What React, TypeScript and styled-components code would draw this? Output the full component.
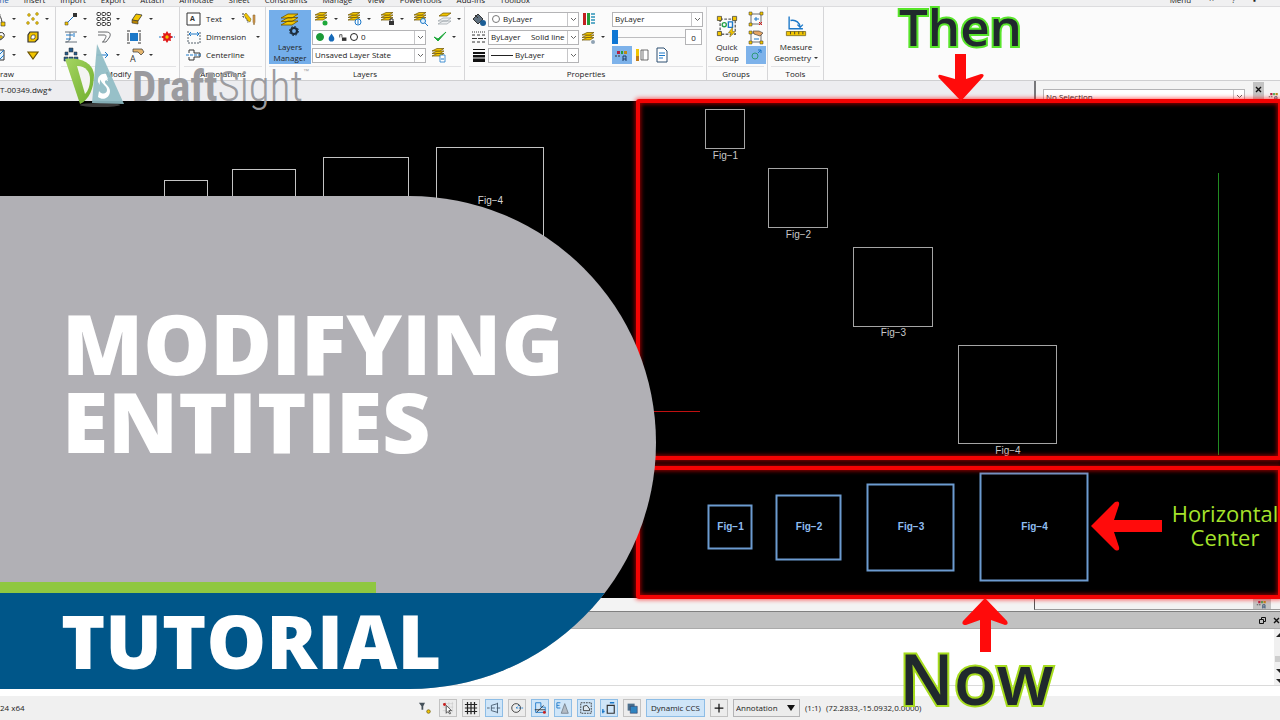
import React from "react";
import styled, { createGlobalStyle, css } from "styled-components";

const Global = createGlobalStyle`
  *, *::before, *::after { box-sizing: border-box; }
  body { margin: 0; background: #fafafa; }
  button, select, input { font: inherit; color: inherit; margin: 0; }
  svg { flex: none; }
`;

const Page = styled.div`
  position: relative;
  display: flex;
  flex-direction: column;
  min-height: 100vh;
  overflow: hidden;
  font: 8px/12px "Open Sans", "Noto Sans", sans-serif;
  color: #222;
`;

/* ---------- menu and ribbon ---------- */

const MenuBar = styled.nav`
  display: flex;
  align-items: flex-end;
  height: 7px;
  padding-right: 24px;
  gap: 15px;
  overflow: hidden;
  background: #f0f0f1;
  border-bottom: 1px solid #dcdcde;
`;

const MenuItem = styled.a<{ $active?: boolean }>`
  flex: none;
  margin-left: ${(p) => (p.$active ? -8 : 0)}px;
  color: ${(p) => (p.$active ? "#1a55a8" : "#222")};
  text-decoration: none;
`;

const MenuEnd = styled.div`
  display: flex;
  gap: 18px;
  margin-left: auto;
`;

const Ribbon = styled.header`
  display: flex;
  height: 74px;
  background: #fbfbfb;
  border-bottom: 1px solid #cfcfd1;
`;

const Group = styled.section<{ $w: number; $pad?: number }>`
  flex: none;
  display: flex;
  flex-direction: column;
  width: ${(p) => p.$w}px;
  padding: 3px 3px 0 ${(p) => p.$pad ?? 4}px;
  border-right: 1px solid #d6d6d8;
`;

const GroupBody = styled.div`
  display: flex;
  height: 54px;
`;

const GroupLabel = styled.h2<{ $start?: boolean }>`
  margin: 2px 0 0;
  border-top: 1px solid #e2e2e4;
  font-size: 8px;
  line-height: 13px;
  font-weight: 400;
  text-align: ${(p) => (p.$start ? "left" : "center")};
`;

const Rows = styled.div<{ $shift?: number }>`
  display: flex;
  flex-direction: column;
  flex: 1;
  min-width: 0;
  margin-left: ${(p) => p.$shift ?? 0}px;
`;

const Row = styled.div<{ $gap?: number }>`
  display: flex;
  align-items: center;
  gap: ${(p) => p.$gap ?? 0}px;
  height: 18px;
`;

const ToolButton = styled.button<{ $w?: number; $on?: boolean }>`
  flex: none;
  display: flex;
  align-items: center;
  justify-content: flex-start;
  gap: 4px;
  width: ${(p) => p.$w ?? 33}px;
  height: 18px;
  padding: 0 2px;
  border: 0;
  white-space: nowrap;
  background: ${(p) => (p.$on ? "#7db2ea" : "transparent")};
`;

const Spacer = styled.span`
  flex: none;
  width: 33px;
`;

const Caret = styled.span`
  flex: none;
  border: 2px solid transparent;
  border-top-color: #333;
  border-bottom: 0;
`;

const BigButton = styled.button<{ $w: number; $on?: boolean }>`
  flex: none;
  display: flex;
  flex-direction: column;
  align-items: center;
  justify-content: flex-end;
  width: ${(p) => p.$w}px;
  height: 54px;
  padding: 0 0 1px;
  gap: 4px;
  border: 0;
  line-height: 11px;
  background: ${(p) => (p.$on ? "#74aeea" : "transparent")};
`;

const BigLabel = styled.span`
  display: flex;
  flex-direction: column;
  align-items: center;
`;

const Inline = styled.span`
  display: flex;
  align-items: center;
  gap: 3px;
`;

const ComboBox = styled.label<{ $w: number }>`
  flex: none;
  display: flex;
  align-items: center;
  gap: 2px;
  width: ${(p) => p.$w}px;
  height: 15px;
  padding-left: 2px;
  border: 1px solid #b4b4b6;
  background: #fff;
`;

const Select = styled.select`
  flex: 1;
  min-width: 0;
  height: 13px;
  padding: 0;
  border: 0;
  appearance: none;
  background: transparent;
`;

const ComboArrow = styled.span`
  flex: none;
  display: grid;
  place-items: center;
  width: 11px;
  height: 13px;
  border-left: 1px solid #c6c6c8;
`;

const Dot = styled.span<{ $c: string; $line: string }>`
  flex: none;
  width: 8px;
  height: 8px;
  margin: 0 1px;
  border: 1px solid ${(p) => p.$line};
  border-radius: 50%;
  background: ${(p) => p.$c};
`;

const LineSample = styled.span`
  flex: none;
  width: 22px;
  height: 1px;
  background: #222;
`;

const Slider = styled.input`
  width: 73px;
  height: 16px;
  appearance: none;
  background: transparent;
  &::-webkit-slider-runnable-track { height: 1px; background: #bdbdbf; }
  &::-webkit-slider-thumb {
    appearance: none;
    width: 6px;
    height: 14px;
    margin-top: -7px;
    background: #0f77d4;
  }
`;

const SmallField = styled.input`
  width: 17px;
  height: 16px;
  padding: 0;
  border: 1px solid #b4b4b6;
  text-align: center;
  background: #fff;
`;

const DocStrip = styled.div`
  display: flex;
  height: 20px;
  background: #ededf0;
`;

const DocTab = styled.span`
  flex: 1;
  padding-top: 3px;
  line-height: 12px;
`;

const PanelHead = styled.div`
  display: flex;
  align-items: flex-start;
  width: 246px;
  padding: 1px 0 0 7px;
  border-left: 2px solid #77777a;
  background: #f4f4f4;
`;

const PanelCombo = styled(ComboBox)`
  margin-top: 7px;
`;

const CloseButton = styled.button`
  display: grid;
  place-items: start center;
  width: 18px;
  height: 19px;
  margin-left: 8px;
  padding: 4px 0 0;
  border: 0;
  background: #c3c3c3;
`;

const PanelTools = styled.span`
  padding: 8px 0 0 4px;
`;

/* ---------- drawing area ---------- */

const Canvas = styled.main`
  flex: 1;
  min-height: 497px;
  background: #000;
`;

const CanvasDrawing = styled.svg`
  display: block;
  width: 100%;
  height: 497px;
  font: 10px "Liberation Sans", sans-serif;
`;

const Frame = styled.div<{ $top: number; $h: number }>`
  position: absolute;
  left: 636px;
  right: -2px;
  top: ${(p) => p.$top}px;
  height: ${(p) => p.$h}px;
  border: 4px solid #f30303;
  border-radius: 3px;
  box-shadow: 0 0 4px 1px rgba(255, 0, 0, 0.6), inset 0 0 4px 1px rgba(255, 0, 0, 0.6);
`;

const outlined = css<{ $edge: string }>`
  color: #20292d;
  font-weight: 600;
  -webkit-text-stroke: 4px ${(p) => p.$edge};
  paint-order: stroke fill;
`;

const Callout = styled.div<{ $x: number; $y: number; $size: number; $edge: string }>`
  position: absolute;
  left: ${(p) => p.$x}px;
  top: ${(p) => p.$y}px;
  font-size: ${(p) => p.$size}px;
  line-height: 60px;
  ${outlined}
`;

const SideNote = styled.div`
  position: absolute;
  left: 1169px;
  top: 501px;
  width: 112px;
  font-size: 22px;
  line-height: 24px;
  text-align: center;
  color: #a5e32b;
`;

const Arrow = styled.svg<{ $x: number; $y: number }>`
  position: absolute;
  left: ${(p) => p.$x}px;
  top: ${(p) => p.$y}px;
  fill: #ff0b0b;
`;

/* ---------- command window and status bar ---------- */

const Gutter = styled.div`
  display: flex;
  justify-content: flex-end;
  height: 14px;
  background: #f3f3f3;
  border-bottom: 1px solid #808080;
`;

const GutterPanel = styled.div`
  display: flex;
  justify-content: flex-end;
  width: 246px;
  height: 12px;
  padding-right: 9px;
  border-left: 1px solid #555;
  border-bottom: 1px solid #999;
`;

const GutterIcon = styled.span`
  width: 18px;
  padding-left: 3px;
  background: #c3c3c3;
`;

const CommandTitle = styled.div`
  display: flex;
  align-items: center;
  justify-content: flex-end;
  gap: 7px;
  height: 17px;
  background: #c1c1c1;
  border-bottom: 1px solid #aaa;
`;

const IconButton = styled.button`
  display: grid;
  place-items: center;
  width: 7px;
  height: 12px;
  padding: 0;
  border: 0;
  background: none;
`;

const CommandText = styled.div`
  display: flex;
  justify-content: flex-end;
  height: 57px;
  background: #fff;
  border-bottom: 1px solid #dadada;
`;

const ScrollBar = styled.div`
  width: 6px;
  background: #f0f0f0;
`;

const CommandInput = styled.input`
  display: block;
  width: 100%;
  height: 10px;
  padding: 0;
  border: 0;
  background: #fff;
`;

const StatusBar = styled.footer`
  display: flex;
  align-items: center;
  height: 24px;
  background: #f0f0f0;
`;

const Version = styled.span`
  width: 416px;
`;

const StatusTools = styled.div`
  display: flex;
  align-items: center;
  gap: 5px;
`;

const StatusButton = styled.button<{ $on?: boolean; $w?: number }>`
  display: grid;
  place-items: center;
  width: ${(p) => p.$w ?? 18}px;
  height: 18px;
  padding: 0;
  border: 1px solid ${(p) => (p.$on ? "#8dbde6" : "#c2c2c2")};
  background: ${(p) => (p.$on ? "#cfe5f8" : "#ececec")};
`;

const StatusIcon = styled.span`
  display: grid;
  place-items: center;
  width: 18px;
`;

const StatusCombo = styled(ComboBox)`
  height: 18px;
  padding-right: 4px;
  background: #ececec;
`;

const Coordinates = styled.output`
  display: flex;
  gap: 5px;
`;

/* ---------- title banner ---------- */

const Banner = styled.div`
  position: absolute;
  left: 0;
  top: 196px;
  display: flex;
  flex-direction: column;
  width: 656px;
  height: 493px;
  overflow: hidden;
  border-radius: 0 247px 247px 0;
  background: #b1b0b5;
`;

const BannerTitle = styled.h1`
  flex: 1;
  margin: 0;
  padding: 108px 0 0 62px;
  font-size: 84px;
  line-height: 78px;
  font-weight: 800;
  color: #fff;
`;

const GreenBar = styled.div`
  width: 376px;
  height: 11px;
  background: #8fc740;
`;

const BannerFoot = styled.p`
  height: 96px;
  margin: 0;
  padding-left: 61px;
  font-size: 75px;
  line-height: 95px;
  font-weight: 800;
  color: #fff;
  background: #005689;
`;

const Brand = styled.div`
  position: absolute;
  left: 64px;
  top: 42px;
  display: flex;
  align-items: flex-start;
  gap: 7px;
  color: #9b9b9f;
`;

const BrandName = styled.span`
  display: flex;
  padding-top: 18px;
  font: 700 43px/52px "Roboto Condensed", "Liberation Sans Narrow", "Roboto", sans-serif;
`;

const BrandLight = styled.span`
  font-weight: 300;
`;

const Trade = styled.sup`
  font: 6px/6px "Liberation Sans", sans-serif;
  padding-top: 8px;
`;

/* ---------- icons ---------- */

const Y = "#f2c500";
const B = "#1c78c8";
const K = "#333";

const Layers = ({ dy = 0 }: { dy?: number }) => (
  <g transform={`translate(0 ${dy})`} fill={Y} stroke="#6b5200" strokeWidth=".7">
    <path d="M1 9l5-2.500h7l-4 2.500z" />
    <path d="M1 6.500L6 4h7L9 6.500z" />
    <path d="M1 4l5-2.500h7L9 4z" />
  </g>
);

const glyphs: Record<string, React.ReactNode> = {
  arc: <><path d="M1 4c6-2 9 2 9 9" fill="none" stroke={K} /><path d="M5 3h3v3H5zM9 11h4v4H9z" fill={Y} stroke={K} strokeWidth=".6" /></>,
  ellipse: <><path d="M2 10c-2-4 8-9 10-5s-7 9-10 5z" fill="none" stroke={K} /><circle cx="9" cy="8" r="1.500" fill={Y} stroke={K} strokeWidth=".5" /></>,
  hatch: <><path d="M2 3h10v10H2z" fill="#e5f3fd" stroke={K} /><path d="M2 8l5-5M2 13L12 3M7 13l5-5" stroke={B} /></>,
  points: <g fill={Y} stroke="#7b6b20" strokeWidth=".5">{[[4, 4], [12, 3], [8, 8], [3, 12], [12, 12]].map(([x, y]) => <circle key={`${x}-${y}`} cx={x} cy={y} r="1.400" />)}</g>,
  region: <><path d="M5 3h8v7l-3 3H3V6z" fill={Y} stroke={K} strokeWidth="1.200" /><path d="M7 6h3v3L9 10H6V8z" fill="#fff" stroke={K} strokeWidth=".7" /></>,
  wedge: <path d="M3 5h10L8 12z" fill={Y} stroke="#6b5200" strokeWidth="1.200" />,
  stretch: <><path d="M4 12l8-8" stroke={B} /><path d="M2 11h3v3H2z" fill={Y} stroke={K} strokeWidth=".5" /><path d="M10 2h4v4h-4z" fill={K} /></>,
  pattern: <g fill="none" stroke={K}>{[2, 7, 12].map((y) => [1, 6, 11].map((x) => <rect key={`${x}-${y}`} x={x} y={y - 0.5} width="3.500" height="3" rx="1" />))}</g>,
  eraser: <><path d="M3 9l4-6 6 1-4 6z" fill={Y} stroke={K} strokeWidth=".8" /><path d="M3 9l6 1v3l-6-1z" fill="#b98500" stroke={K} strokeWidth=".6" /></>,
  trim: <g fill="none" stroke={B}><path d="M2 3h12M2 13h12M7 3v5c0 3-1 5-4 5" stroke="#68727c" /><path d="M3 6h7M3 10h5M11 4v4" /></g>,
  fillet: <path d="M2 3h8c5 0 5 3 3 6l-3 4H6M2 6h6c3 0 2 2 1 4l-2 3" fill="none" stroke="#66686b" />,
  scale: <><path d="M4 4h8v8H4z" fill={B} /><path d="M1 2h3M12 2h3M1 14h3M12 14h3M2 4v8M14 4v8" stroke={K} fill="none" /></>,
  burst: <><path d="M0 8h16" stroke={B} strokeDasharray="2 1" /><path d="M8 2l1.500 2.500L12 4l-.5 2.500L14 8l-2.500 1.500L12 12l-2.500-.5L8 14l-1.500-2.500L4 12l.5-2.500L2 8l2.500-1.500L4 4l2.500.5z" fill="#e01818" /><circle cx="8" cy="8" r="1.700" fill={Y} /></>,
  blocks: <g fill="#265c8c" stroke={K} strokeWidth=".5"><path d="M6 1h4v4H6zM2 5h3v3H2zM11 5h3v3h-3zM1 10h4v4H1zM6 10h4v4H6zM11 10h4v4h-4z" /></g>,
  move: <path d="M1 8h11M9 5l3 3-3 3" fill="none" stroke={B} />,
  brushA: <><path d="M4 2h9l2 3-3 3-3-3H4z" fill="#e5b56d" stroke={K} strokeWidth=".7" /><text x="1" y="15" fontSize="9" fill={K}>A</text></>,
  text: <><path d="M1 2h13v12H1z" fill="#fff" stroke={K} /><text x="4" y="10" fontSize="7" fontWeight="700" fill={K}>A</text></>,
  dimension: <><path d="M2 2v12h12V2" fill="none" stroke="#55606a" strokeDasharray="2 1" /><path d="M3 5h10M5 3L3 5l2 2M11 3l2 2-2 2" fill="none" stroke={B} /></>,
  centerline: <g fill="none" stroke={K}><path d="M3 6V3h5v3h6M3 10v3h5v-3h6v-4" /><path d="M0 8h16" stroke={B} strokeDasharray="3 1" /></g>,
  pencil: <><path d="M2 2v4c3 0 4 2 5 6" fill="none" stroke={K} strokeDasharray="2 1" /><path d="M5 2l5 6-1 3-2-1-4-6z" fill={Y} stroke="#7b6b20" strokeWidth=".6" /><path d="M12 4v7l1 3 1-3V4z" fill="#d79b52" stroke="#7b5b20" strokeWidth=".5" /></>,
  layerAdd: <><Layers /><circle cx="11" cy="12" r="2.500" fill="#1da83a" /></>,
  layerFlash: <><Layers /><circle cx="11" cy="11" r="3" fill="#fff" stroke={B} /><path d="M11 9v4" stroke={B} /></>,
  layerLock: <><Layers /><path d="M9 10h5v4H9z" fill={K} /><path d="M10 10V8h3v2" fill="none" stroke={K} /></>,
  layerFind: <><Layers /><circle cx="10" cy="10" r="2.500" fill="#dff1ff" stroke={B} /><path d="M12 12l3 3" stroke={B} /></>,
  layerOut: <><path d="M1 10l5-3h8l-4 3zM1 13l5-3h8l-4 3z" fill="#eef0f2" stroke="#9aa0a6" strokeWidth=".7" /><path d="M2 5l4-3h8l-4 3z" fill={Y} stroke="#6b5200" strokeWidth=".7" /></>,
  layerState: <><Layers /><path d="M9 8h5v7H9z" fill="#fff" stroke={B} strokeWidth=".8" /><path d="M10 12h3" stroke={B} /></>,
  layerLink: <><Layers dy={2} /><circle cx="12" cy="13" r="2" fill="#8fa2b3" /></>,
  check: <path d="M2 8l4 4 8-9-8 7z" fill="#1da83a" stroke="#1da83a" />,
  paint: <><path d="M2 8l5-5 5 5-5 5z" fill="#60707f" stroke={K} /><circle cx="12" cy="12" r="3" fill="#1b5d95" /><path d="M4 4l3 3" stroke={K} /></>,
  dashes: <g stroke={K}><path d="M1 3h14" strokeDasharray="1 1" /><path d="M1 6h14M1 13h14" strokeDasharray="3 2" /><path d="M1 9.500h14" strokeDasharray="5 1" /></g>,
  weights: <g fill="#111"><path d="M2 2h12v1H2zM2 5h12v2H2zM2 8h12v2.500H2zM2 11.500h12V15H2z" /></g>,
  colors: <><path d="M2 2h3v12H2z" fill="#c21f1f" /><path d="M6 2h3v12H6z" fill="#259c3b" /><path d="M11 2v12M13 2v12" stroke="#2d93b8" strokeWidth="1.500" strokeDasharray="2 1" /></>,
  swatchA: <><path d="M3 4h3v3H3z" fill="#b21f3f" /><path d="M7 4h2v3H7z" fill="#259c3b" /><path d="M10 4h3v3h-3z" fill="#b98a1d" /><path d="M1 9h6" stroke={K} strokeDasharray="2 1" /><path d="M9 14V9h3v5M9 12h3" fill="none" stroke="#1c3d66" /></>,
  brushPage: <><path d="M7 3h7v10H7z" fill="#fff" stroke={K} strokeWidth=".7" /><path d="M2 2h3v7H2z" fill={Y} /><path d="M2 9h3v5H2z" fill="#c27d16" /><path d="M9 3v10" stroke="#777" /></>,
  page: <><path d="M3 1h7l3 3v11H3z" fill="#fff" stroke="#2c4f70" /><path d="M5 6h6M5 8.500h6M5 11h4" stroke={B} /></>,
  group: <><path d="M3 3h11v11H3z" fill="none" stroke="#666" strokeDasharray="2 1" /><g fill={Y} stroke={K} strokeWidth=".5"><path d="M1 1h3v3H1zM12 1h3v3h-3zM1 12h3v3H1z" /></g><circle cx="6" cy="7" r="1.500" fill="none" stroke="#24a148" /><path d="M9 5h3v4H9z" fill="none" stroke={B} /><path d="M12 9l-3 4h2l-1 3 4-4h-2z" fill={Y} stroke="#7b6b20" strokeWidth=".4" /></>,
  ungroup: <><path d="M3 3h10v10H3z" fill="none" stroke={K} strokeWidth=".7" /><g fill={Y} stroke={K} strokeWidth=".5"><path d="M1 1h3v3H1zM12 1h3v3h-3zM1 12h3v3H1z" /></g><path d="M6 8h5M8 6v4" stroke={B} /><path d="M11 11l3 3M14 11l-3 3" stroke="#e01818" /></>,
  groupEdit: <><path d="M3 4h10v9H3z" fill="none" stroke={K} strokeWidth=".7" /><path d="M5 2h6l4 2-3 3-6-2z" fill="#e5a565" stroke={K} strokeWidth=".6" /><g fill={Y} stroke={K} strokeWidth=".5"><path d="M1 2h3v3H1zM1 12h3v3H1zM12 12h3v3h-3z" /></g><path d="M6 10h5" stroke={B} /></>,
  groupSel: <><circle cx="7" cy="9" r="3" fill="none" stroke="#2f9a77" /><path d="M10 6l3-3M10 3h3v3" fill="none" stroke={B} /></>,
  measure: <><path d="M3 1v9h10M4 4c4-1 7 2 7 5M9 7l2 2 2-2" fill="none" stroke={B} /><path d="M1 12h14v3H1z" fill={Y} stroke="#7b6b20" strokeWidth=".6" /><path d="M4 12v2M7 12v2M10 12v2M13 12v2" stroke={K} strokeWidth=".6" /></>,
  drop: <path d="M8 1c3 5 5 6 5 9a5 5 0 01-10 0c0-3 2-4 5-9z" fill="#1569b8" />,
  lock: <><path d="M7 8h8v6H7z" fill={K} /><path d="M3 8V3h4v5" fill="none" stroke={K} strokeWidth="1.400" /></>,
  filter: <><path d="M1 2h7L6 6v4H4V6z" fill="#45515a" /><circle cx="12" cy="12" r="2" fill={Y} stroke="#7b6b20" /></>,
  snap: <><path d="M2 3h12M2 7h12M2 11h12M5 1v12M9 1v12M13 1v12" stroke="#c4c4c4" strokeWidth=".6" /><path d="M6 5v9l2-2 2 3 1-1-2-3h3z" fill="#fff" stroke={K} strokeWidth=".9" /><circle cx="4" cy="4" r="1.700" fill="#c81e1e" /></>,
  grid: <path d="M1 4h14M1 8h14M1 12h14M4 1v14M8 1v14M12 1v14" stroke="#222" strokeWidth="1.400" />,
  ortho: <path d="M12 2v12M12 3L5 5v6l7 2M0 8h3M5 8h4M11 8h4" fill="none" stroke="#45586b" />,
  polar: <><circle cx="7" cy="8" r="5" fill="none" stroke={K} /><path d="M7 8l4-4M7 8h8" stroke={B} strokeDasharray="2 1" /></>,
  esnap: <><path d="M3 2h6v5h5v6H3z" fill="none" stroke={B} /><path d="M4 13L12 5M2 10h12" stroke={K} /><circle cx="13" cy="13" r="1.700" fill="#c81e1e" /></>,
  etrack: <><path d="M6 14L10 3l4 11z" fill="#b4bcc5" stroke="#77828e" /><path d="M1 2h4M1 5h3M1 8h4M1 2v6" stroke={B} /></>,
  hull: <><path d="M2 2h12v12H2z" fill="none" stroke={K} strokeDasharray="2 1" /><path d="M5 11V6l4-1 3 4v2z" fill="#dfe9f1" stroke={K} /></>,
  quick: <><path d="M6 5h8v9H6z" fill="none" stroke={K} strokeWidth="1.300" /><path d="M1 14v-5M0 12h3M9 2h5" stroke={B} strokeWidth="1.500" /></>,
  stack: <><path d="M3 3h8v8H3z" fill="#4b6f8d" /><path d="M6 6h8v8H6z" fill="#2f84c0" stroke="#335" strokeWidth=".6" /></>,
  plus: <path d="M8 1v14M1 8h14" stroke="#111" strokeWidth="2" />,
};

const Icon = ({ name, size = 16 }: { name: string; size?: number }) => (
  <svg width={size} height={size} viewBox="0 0 16 16" aria-hidden="true">
    {glyphs[name]}
  </svg>
);

const Chevron = () => (
  <svg width="7" height="5" viewBox="0 0 7 5" aria-hidden="true">
    <path d="M1 1l2.500 2.500L6 1" fill="none" stroke="#666" />
  </svg>
);

const Cross = () => (
  <svg width="7" height="7" viewBox="0 0 7 7" aria-hidden="true">
    <path d="M1 1l5 5M6 1L1 6" stroke="#111" strokeWidth="1.400" />
  </svg>
);

const Tool = ({ name, caret, w, on }: { name: string; caret?: boolean; w?: number; on?: boolean }) => (
  <ToolButton aria-label={name} $w={w} $on={on}>
    <Icon name={name} />
    {caret && <Caret />}
  </ToolButton>
);

const Combo = ({ w, label, value, children }: { w: number; label: string; value: string; children?: React.ReactNode }) => (
  <ComboBox $w={w}>
    {children}
    <Select aria-label={label}>
      <option>{value}</option>
    </Select>
    <ComboArrow><Chevron /></ComboArrow>
  </ComboBox>
);

/* ---------- drawing data ---------- */

type Fig = { x: number; y: number; s: number; ty: number };

const sourceFigs: Fig[] = [
  { x: 164, y: 180, s: 43, ty: 204 },
  { x: 232, y: 169, s: 63, ty: 204 },
  { x: 323, y: 157, s: 85, ty: 204 },
  { x: 436, y: 147, s: 107, ty: 204 },
];
const thenFigs: Fig[] = [
  { x: 705, y: 109, s: 39, ty: 159 },
  { x: 768, y: 168, s: 59, ty: 238 },
  { x: 853, y: 247, s: 79, ty: 336 },
  { x: 958, y: 345, s: 98, ty: 454 },
];
const nowFigs: Fig[] = [
  { x: 708, y: 505, s: 43, ty: 530 },
  { x: 776, y: 495, s: 64, ty: 530 },
  { x: 867, y: 484, s: 86, ty: 530 },
  { x: 980, y: 473, s: 107, ty: 530 },
];

const Figures = ({ figs, line, ink, width, bold }: { figs: Fig[]; line: string; ink: string; width: number; bold?: boolean }) => (
  <>
    {figs.map((f, i) => (
      <g key={f.x}>
        <rect x={f.x + 0.5} y={f.y + 0.5} width={f.s} height={f.s} fill="none" stroke={line} strokeWidth={width} />
        <text x={f.x + 1 + f.s / 2} y={f.ty} fill={ink} fontWeight={bold ? 700 : 400} textAnchor="middle">{`Fig−${i + 1}`}</text>
      </g>
    ))}
  </>
);

const menus = ["Insert", "Import", "Export", "Attach", "Annotate", "Sheet", "Constraints", "Manage", "View", "Powertools", "Add-Ins", "Toolbox"];
const statusTools: [string, boolean][] = [
  ["snap", false], ["grid", false], ["ortho", true], ["polar", false], ["esnap", true],
  ["etrack", true], ["hull", true], ["quick", true], ["stack", false],
];

export default function App() {
  return (
    <Page>
      <Global />
      <MenuBar>
        <MenuItem href="#home" $active>ome</MenuItem>
        {menus.map((m) => <MenuItem key={m} href={`#${m}`}>{m}</MenuItem>)}
        <MenuEnd>
          <MenuItem href="#menu">Menu</MenuItem>
          <span>^</span>
          <span>?</span>
          <span>▪</span>
        </MenuEnd>
      </MenuBar>

      <Ribbon>
        <Group $w={56} $pad={0}>
          <GroupBody>
            <Rows $shift={-10}>
              <Row><Tool name="arc" caret /><Tool name="points" caret /></Row>
              <Row><Tool name="ellipse" caret /><Tool name="region" /></Row>
              <Row><Tool name="hatch" caret /><Tool name="wedge" /></Row>
            </Rows>
          </GroupBody>
          <GroupLabel $start>raw</GroupLabel>
        </Group>

        <Group $w={124} $pad={5}>
          <GroupBody>
            <Rows>
              <Row><Tool name="stretch" caret /><Tool name="pattern" caret /><Tool name="eraser" caret /></Row>
              <Row><Tool name="trim" caret /><Tool name="fillet" w={30} /><Tool name="scale" w={33} /><Tool name="burst" w={20} /></Row>
              <Row><Tool name="blocks" caret /><Tool name="move" caret /><Tool name="brushA" caret /></Row>
            </Rows>
          </GroupBody>
          <GroupLabel>Modify</GroupLabel>
        </Group>

        <Group $w={86}>
          <GroupBody>
            <Rows>
              <Row $gap={4}>
                <ToolButton $w={43}><Icon name="text" />Text</ToolButton>
                <Caret />
                <Tool name="pencil" w={20} />
              </Row>
              <Row $gap={8}>
                <ToolButton $w={64}><Icon name="dimension" />Dimension</ToolButton>
                <Caret />
              </Row>
              <Row><ToolButton $w={70}><Icon name="centerline" />Centerline</ToolButton></Row>
            </Rows>
          </GroupBody>
          <GroupLabel>Annotations</GroupLabel>
        </Group>

        <Group $w={199} $pad={3}>
          <GroupBody>
            <BigButton $w={42} $on>
              <svg width="22" height="24" viewBox="0 0 22 24" aria-hidden="true">
                <g fill={Y} stroke="#6b5200" strokeWidth=".8">
                  <path d="M2 12l7-4h10l-6 4zM2 8.500l7-4h10l-6 4zM2 5l7-4h10l-6 4z" />
                </g>
                <circle cx="15" cy="18" r="3" fill="none" stroke="#1d2d3d" strokeWidth="2.200" />
                <circle cx="15" cy="18" r="4.500" fill="none" stroke="#1d2d3d" strokeDasharray="1.800 1.700" />
              </svg>
              <BigLabel><span>Layers</span><span>Manager</span></BigLabel>
            </BigButton>
            <Rows $shift={1}>
              <Row>
                <Tool name="layerAdd" caret /><Tool name="layerFlash" caret /><Tool name="layerLock" caret />
                <Tool name="layerFind" w={24} /><Tool name="layerOut" w={28} caret />
              </Row>
              <Row $gap={4}>
                <Combo w={114} label="Active layer" value="0">
                  <Dot $c="#1c9a37" $line="#1c9a37" />
                  <Icon name="drop" size={9} />
                  <Icon name="lock" size={9} />
                  <Dot $c="#fff" $line="#222" />
                </Combo>
                <Tool name="check" w={28} caret />
              </Row>
              <Row $gap={3}>
                <Combo w={114} label="Layer state" value="Unsaved Layer State" />
                <Tool name="layerState" w={20} />
              </Row>
            </Rows>
          </GroupBody>
          <GroupLabel>Layers</GroupLabel>
        </Group>

        <Group $w={242}>
          <GroupBody>
            <Rows>
              <Row>
                <Tool name="paint" w={19} />
                <Combo w={91} label="Color" value="ByLayer"><Dot $c="#fff" $line="#777" /></Combo>
                <Tool name="colors" w={33} />
                <Combo w={91} label="Transparency" value="ByLayer" />
              </Row>
              <Row>
                <Tool name="dashes" w={19} />
                <Combo w={91} label="Line style" value={"ByLayer\u00a0\u00a0\u00a0\u00a0\u00a0Solid line"} />
                <Tool name="layerLink" w={33} caret />
                <Slider type="range" min={0} max={90} defaultValue={0} aria-label="Transparency level" />
                <SmallField defaultValue="0" aria-label="Transparency value" />
              </Row>
              <Row>
                <Tool name="weights" w={19} />
                <Combo w={91} label="Line weight" value="ByLayer"><LineSample /></Combo>
                <Spacer />
                <Tool name="swatchA" w={20} on /><Tool name="brushPage" w={20} /><Tool name="page" w={20} />
              </Row>
            </Rows>
          </GroupBody>
          <GroupLabel>Properties</GroupLabel>
        </Group>

        <Group $w={61} $pad={1}>
          <GroupBody>
            <BigButton $w={38}>
              <Icon name="group" size={22} />
              <BigLabel><span>Quick</span><span>Group</span></BigLabel>
            </BigButton>
            <Rows>
              <Row><Tool name="ungroup" w={20} /></Row>
              <Row><Tool name="groupEdit" w={20} /></Row>
              <Row><Tool name="groupSel" w={20} on /></Row>
            </Rows>
          </GroupBody>
          <GroupLabel>Groups</GroupLabel>
        </Group>

        <Group $w={56} $pad={3}>
          <GroupBody>
            <BigButton $w={50}>
              <Icon name="measure" size={22} />
              <BigLabel><span>Measure</span><Inline>Geometry<Caret /></Inline></BigLabel>
            </BigButton>
          </GroupBody>
          <GroupLabel>Tools</GroupLabel>
        </Group>
      </Ribbon>

      <DocStrip>
        <DocTab>T-00349.dwg*</DocTab>
        <PanelHead>
          <PanelCombo $w={202}>
            <Select aria-label="Selection"><option>No Selection</option></Select>
            <ComboArrow><Chevron /></ComboArrow>
          </PanelCombo>
          <CloseButton aria-label="Close panel"><Cross /></CloseButton>
          <PanelTools><Icon name="swatchA" size={12} /></PanelTools>
        </PanelHead>
      </DocStrip>

      <Canvas>
        <CanvasDrawing>
          <g transform="translate(0 -101)">
            <Figures figs={sourceFigs} line="#c4c4c4" ink="#d8d8d8" width={1} />
            <Figures figs={thenFigs} line="#a5a5a5" ink="#c8c8c8" width={1} />
            <Figures figs={nowFigs} line="#6c9bd0" ink="#8fbdf0" width={2} bold />
            <path d="M1218.500 173v282" stroke="#218a21" />
            <path d="M640 411.500h60" stroke="#c01010" />
          </g>
        </CanvasDrawing>
      </Canvas>

      <Gutter><GutterPanel><GutterIcon><Icon name="swatchA" size={12} /></GutterIcon></GutterPanel></Gutter>
      <CommandTitle>
        <IconButton aria-label="Float">
          <svg width="7" height="7" viewBox="0 0 7 7" aria-hidden="true"><path d="M2.500 2.500v-2h4v4h-2M.5 2.500h4v4h-4z" fill="none" stroke="#111" /></svg>
        </IconButton>
        <IconButton aria-label="Close"><Cross /></IconButton>
      </CommandTitle>
      <CommandText>
        <ScrollBar>
          <svg width="6" height="56" viewBox="0 0 6 56" aria-hidden="true">
            <path d="M2 8l4-4v4zM2 40h4v4zM2 50h4v4z" fill="#222" /><path d="M1 27h5v6H1z" fill="#cdcdcd" />
          </svg>
        </ScrollBar>
      </CommandText>
      <CommandInput aria-label="Command" />
      <StatusBar>
        <Version>24 x64</Version>
        <StatusTools>
          <StatusIcon><Icon name="filter" size={14} /></StatusIcon>
          {statusTools.map(([name, on]) => (
            <StatusButton key={name} $on={on} aria-label={name}><Icon name={name} size={14} /></StatusButton>
          ))}
          <StatusButton $on $w={59}>Dynamic CCS</StatusButton>
          <StatusButton aria-label="Add"><Icon name="plus" size={10} /></StatusButton>
          <StatusCombo $w={67}>
            <Select aria-label="Workspace"><option>Annotation</option></Select>
            <svg width="8" height="6" viewBox="0 0 8 6" aria-hidden="true"><path d="M0 0h8L4 6z" fill="#111" /></svg>
          </StatusCombo>
          <Coordinates><span>(1:1)</span><span>(72.2833,-15.0932,0.0000)</span></Coordinates>
        </StatusTools>
      </StatusBar>

      <Frame $top={99} $h={361} />
      <Frame $top={466} $h={133} />
      <Callout $x={899} $y={-4} $size={51} $edge="#58e52a">Then</Callout>
      <Arrow $x={938} $y={54} width="46" height="47"><path d="M17 0h11v25l15-5q4 0 2 3L23 47 1 24q-2-4 2-3l14 4z" /></Arrow>
      <Arrow $x={1091} $y={501} width="72" height="50"><path d="M0 25L24 1q5-2 4 3l-5 15h48v12H23l5 15q1 5-4 3z" /></Arrow>
      <Arrow $x={962} $y={598} width="47" height="55"><path d="M23 0l22 23q2 4-2 4l-14-5v32H18V22L4 27q-5 0-3-4z" /></Arrow>
      <SideNote>Horizontal Center</SideNote>
      <Callout $x={899} $y={648} $size={70} $edge="#a6dc1e">Now</Callout>

      <Banner>
        <BannerTitle>MODIFYING<br />ENTITIES</BannerTitle>
        <GreenBar />
        <BannerFoot>TUTORIAL</BannerFoot>
      </Banner>

      <Brand>
        <svg width="61" height="66" viewBox="0 0 61 66" aria-label="DraftSight">
          <defs>
            <linearGradient id="leaf" x1="0" y1="0" x2="1" y2="1">
              <stop offset="0" stopColor="#a6d563" />
              <stop offset="1" stopColor="#6fae2c" />
            </linearGradient>
          </defs>
          <ellipse cx="36" cy="63" rx="20" ry="2" fill="#666" opacity=".6" />
          <path d="M1 17c12-2 28 2 29 16 0 13-5 25-14 29z" fill="url(#leaf)" />
          <path d="M13 24c9 0 13 6 13 13 0 7-2 12-5 15z" fill="#f4f4f2" />
          <path d="M33 2L60 62 28 61z" fill="#8fbcc4" opacity=".92" />
          <path d="M44 38c-3-4-8-3-7 1 1 3 6 5 6 9s-5 5-8 1l-1 6c5 4 12 1 12-6 0-5-6-7-5-10 1-1 2-1 3 0zM42 32c-4-1-9 2-8 8l2 3c-1-5 2-8 8-6z" fill="#fff" />
        </svg>
        <BrandName>Draft<BrandLight>Sight</BrandLight><Trade>™</Trade></BrandName>
      </Brand>
    </Page>
  );
}
